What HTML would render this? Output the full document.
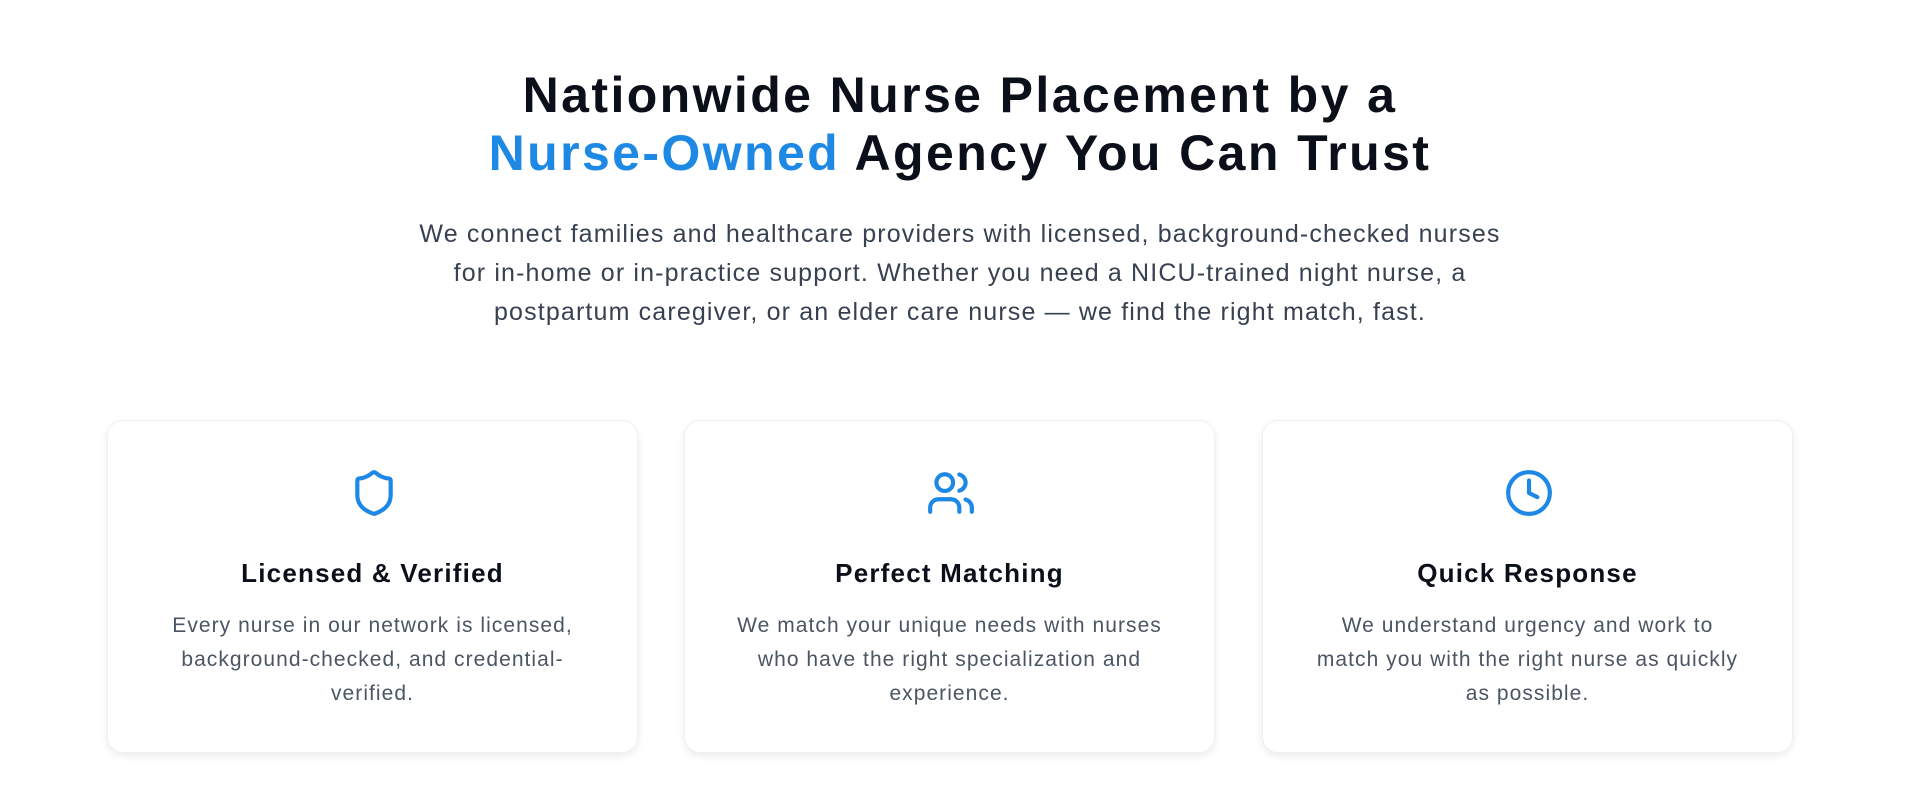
<!DOCTYPE html>
<html><head><meta charset="utf-8"><style>
*{box-sizing:border-box;margin:0;padding:0}
body{width:1920px;height:812px;background:#fff;font-family:"Liberation Sans",sans-serif;overflow:hidden}
h1{position:absolute;top:66px;left:0;width:1920px;text-align:center;font-size:50px;line-height:58px;font-weight:700;color:#0b0f19;letter-spacing:2.4px}
h1 span{color:#1e88e5}
p.lead{position:absolute;top:215px;left:400px;width:1120px;text-align:center;font-size:25px;line-height:39px;color:#374151;letter-spacing:1.15px}
.card{position:absolute;top:420px;width:531px;height:333px;border:1px solid #eef0f3;border-radius:16px;box-shadow:0 3px 8px rgba(0,0,0,.08);text-align:center}
.card svg{position:absolute;left:241px;top:47px}
.card h3{position:absolute;top:137px;left:0;width:100%;font-size:26px;font-weight:700;color:#0b0f19;letter-spacing:1.2px}
.card p{position:absolute;top:188px;left:44px;right:44px;font-size:21px;line-height:34px;color:#4b5563;letter-spacing:1.05px}
</style></head><body>
<h1>Nationwide Nurse Placement by a<br><span>Nurse-Owned</span> Agency You Can Trust</h1>
<p class="lead">We connect families and healthcare providers with licensed, background-checked nurses for in-home or in-practice support. Whether you need a NICU-trained night nurse, a postpartum caregiver, or an elder care nurse — we find the right match, fast.</p>
<div class="card" style="left:107px">
<svg width="50" height="50" viewBox="0 0 24 24" fill="none" stroke="#1e88e5" stroke-width="2" stroke-linecap="round" stroke-linejoin="round"><path d="M20 13c0 5-3.5 7.5-7.66 8.950a1 1 0 0 1-.67-.01C7.5 20.5 4 18 4 13V6a1 1 0 0 1 1-1c2 0 4.5-1.2 6.24-2.72a1.17 1.17 0 0 1 1.52 0C14.510 3.81 17 5 19 5a1 1 0 0 1 1 1z"/></svg>
<h3>Licensed &amp; Verified</h3>
<p>Every nurse in our network is licensed,<br>background-checked, and credential-<br>verified.</p>
</div>
<div class="card" style="left:684px">
<svg width="50" height="50" viewBox="0 0 24 24" fill="none" stroke="#1e88e5" stroke-width="2" stroke-linecap="round" stroke-linejoin="round"><path d="M16 21v-2a4 4 0 0 0-4-4H6a4 4 0 0 0-4 4v2"/><circle cx="9" cy="7" r="4"/><path d="M22 21v-2a4 4 0 0 0-3-3.870"/><path d="M16 3.13a4 4 0 0 1 0 7.75"/></svg>
<h3>Perfect Matching</h3>
<p>We match your unique needs with nurses<br>who have the right specialization and<br>experience.</p>
</div>
<div class="card" style="left:1262px">
<svg width="50" height="50" viewBox="0 0 24 24" fill="none" stroke="#1e88e5" stroke-width="2" stroke-linecap="round" stroke-linejoin="round"><circle cx="12" cy="12" r="10"/><polyline points="12 6 12 12 16 14"/></svg>
<h3>Quick Response</h3>
<p>We understand urgency and work to<br>match you with the right nurse as quickly<br>as possible.</p>
</div>
</body></html>
